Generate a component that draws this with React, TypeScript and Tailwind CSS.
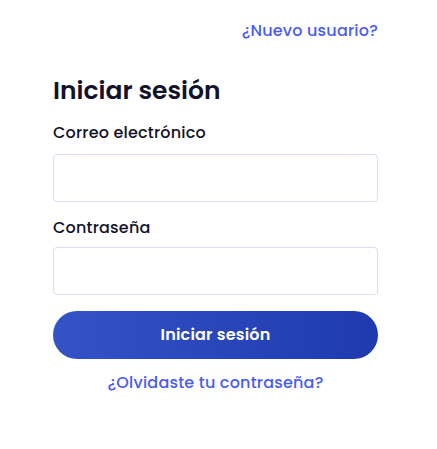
export default function App() {
  return (
    <div
      className="min-h-[449px] w-full bg-white"
      style={{ fontFamily: 'Poppins, Inter, "Noto Sans", sans-serif' }}
    >
      <div className="ml-[53px] flex w-[325px] flex-col pt-[19px]">
        <div className="flex justify-end">
          <a href="#" className="text-[16px] font-medium leading-6 tracking-[0.2px] text-[#4a5cf0]">
            ¿Nuevo usuario?
          </a>
        </div>

        <h1 className="mt-[32px] text-[25px] font-semibold leading-8 text-[#12122a]">
          Iniciar sesión
        </h1>

        <form className="mt-[14px] flex flex-col" onSubmit={(e) => e.preventDefault()}>
          <label className="text-[16px] font-medium leading-6 tracking-[0.2px] text-[#12122a]">
            Correo electrónico
          </label>
          <input
            type="email"
            className="mt-[9px] h-[48px] w-full rounded-[4px] border border-[#d9ddf5] px-3 outline-none"
          />

          <label className="mt-[14px] text-[16px] font-medium leading-6 tracking-[0.2px] text-[#12122a]">
            Contraseña
          </label>
          <input
            type="password"
            className="mt-[7px] h-[48px] w-full rounded-[4px] border border-[#d9ddf5] px-3 outline-none"
          />

          <button
            type="submit"
            className="mt-[16px] h-[48px] w-full rounded-full bg-gradient-to-r from-[#3453c6] to-[#1e3aae] text-[16px] font-semibold tracking-[0.2px] text-white"
          >
            Iniciar sesión
          </button>
        </form>

        <a
          href="#"
          className="mt-[12px] text-center text-[16px] font-medium leading-6 tracking-[0.2px] text-[#4a5cf0]"
        >
          ¿Olvidaste tu contraseña?
        </a>
      </div>
    </div>
  )
}
